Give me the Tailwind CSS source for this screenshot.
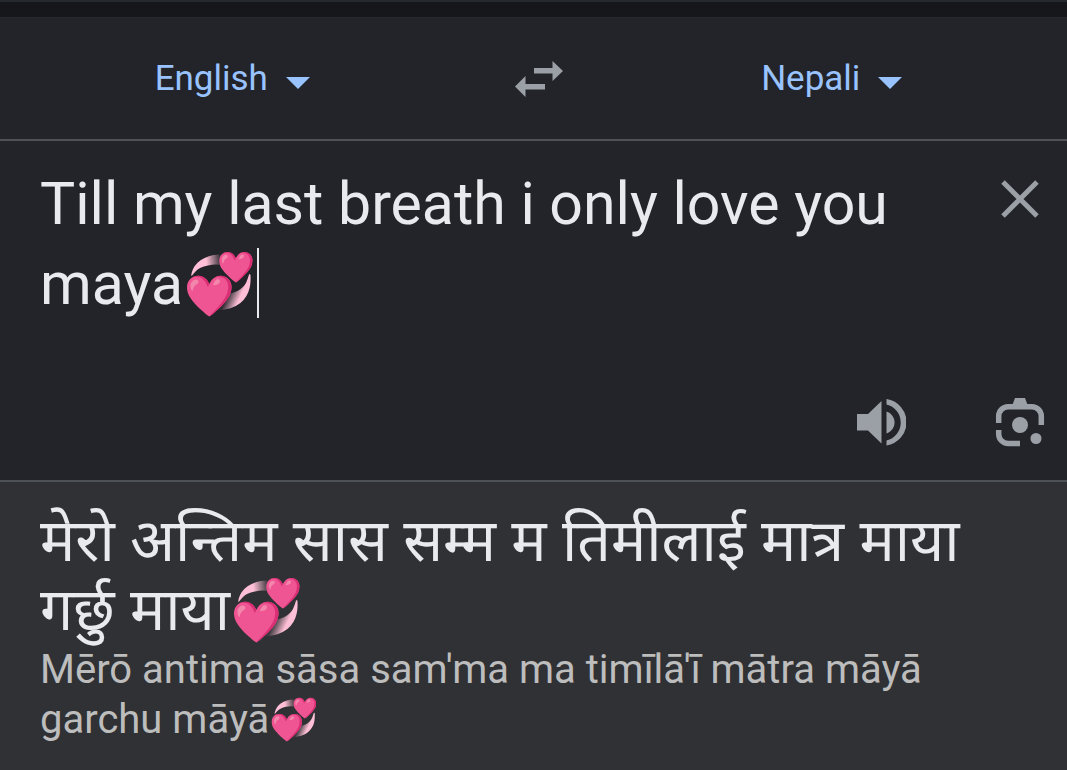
<!DOCTYPE html>
<html lang="en">
<head>
<meta charset="utf-8">
<meta name="viewport" content="width=device-width, initial-scale=1">
<title>Translate</title>
<script src="https://cdn.jsdelivr.net/npm/@tailwindcss/browser@4"></script>
</head>
<body class="min-h-screen flex flex-col bg-[#303134] font-['Roboto','Noto_Sans',sans-serif] text-[#e8eaed]">
<div class="h-[18px] bg-[#15171a] border-t-2 border-b border-[#26292d]"></div>
<header class="grid grid-cols-[1fr_48px_1fr] items-center h-[123px] pl-[10px] bg-[#232429] border-b-2 border-[#4e5155] text-[#99c3ff] text-[35px]">
  <div class="flex items-center justify-center gap-[18px] pt-px pr-[60px]">
    <select aria-label="Source language" class="appearance-none field-sizing-content outline-none bg-transparent"><option>English</option></select>
    <svg class="w-6 h-3 mt-2" viewBox="0 0 24 12" fill="currentColor" aria-hidden="true"><path d="M0 0H24L12 12Z"/></svg>
  </div>
  <button aria-label="Swap languages" class="text-[#9aa0a6]">
    <svg class="block w-12 h-9" viewBox="0 0 48 36" fill="currentColor" aria-hidden="true"><path d="M19 7H37.500V0L48 10L37.500 20V12.500H19ZM30 28.500H10.500V36L0 25.500L10.500 15V23H30Z"/></svg>
  </button>
  <div class="flex items-center justify-center gap-[18px] pt-px pl-[34px]">
    <select aria-label="Target language" class="appearance-none field-sizing-content outline-none bg-transparent"><option>Nepali</option></select>
    <svg class="w-6 h-3 mt-2" viewBox="0 0 24 12" fill="currentColor" aria-hidden="true"><path d="M0 0H24L12 12Z"/></svg>
  </div>
</header>
<section class="bg-[#232429] border-b-2 border-[#4e5155] pt-[23px] pb-8 pl-10 pr-[22px]">
  <div class="flex items-start justify-between">
    <div class="relative flex-1">
      <textarea aria-label="Text to translate" spellcheck="false" rows="2" class="block w-full resize-none overflow-hidden outline-none bg-transparent text-[59px] leading-[80px]">Till my last breath i only love you maya💞</textarea>
      <span class="absolute left-[217px] top-[84px] w-[2px] h-[70px] bg-[#e8eaed]"></span>
    </div>
    <button aria-label="Clear text" class="mt-[15px] mr-[5px] text-[#9aa0a6]">
      <svg class="block w-[40px] h-[40px]" viewBox="0 0 40 40" fill="none" stroke="currentColor" stroke-width="5" aria-hidden="true"><path d="M3 3L37 37M37 3L3 37"/></svg>
    </button>
  </div>
  <div class="flex justify-end gap-[89px] mt-[74px] text-[#9aa0a6]">
    <button aria-label="Listen"><svg class="block w-[50px] h-[50px]" viewBox="0 0 50 50" fill="currentColor" aria-hidden="true"><path d="M1 16H12L25.500 3V45.500L12 32.500H1ZM30.500 13.500A11.500 11.500 0 0 1 30.500 35.500ZM30.500 1A23.500 23.500 0 0 1 30.500 47.500V42.500A18.500 18.500 0 0 0 30.500 6.500Z"/></svg></button>
    <button aria-label="Translate with camera"><svg class="block w-[50px] h-[50px]" viewBox="0 0 50 50" aria-hidden="true"><path fill="none" stroke="currentColor" stroke-width="5.500" d="M3.700 25V18A9.500 9.500 0 0 1 13 8.700H37A9.500 9.500 0 0 1 46.300 18V27M3.700 32V36A9.500 9.500 0 0 0 13 45.500H25"/><path fill="currentColor" d="M17 8L20 0H30L33 8Z"/><circle cx="25" cy="27" r="8" fill="currentColor"/><circle cx="41" cy="40.500" r="5.500" fill="currentColor"/></svg></button>
  </div>
</section>
<main class="flex-1 px-10 pt-[22px] pb-2">
  <p lang="ne" class="text-[59px] leading-[69px] font-['Noto_Sans',sans-serif]">मेरो अन्तिम सास सम्म म तिमीलाई मात्र माया गर्छु माया💞</p>
  <p class="mt-[3px] text-[40px] leading-[50px] text-[#bdbdbd]">Mērō antima sāsa sam'ma ma timīlā'ī mātra māyā garchu māyā💞</p>
</main>
</body>
</html>
